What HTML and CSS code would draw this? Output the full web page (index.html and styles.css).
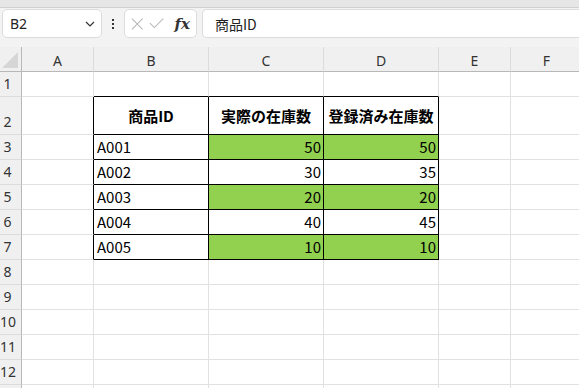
FILE: index.html
```html
<!DOCTYPE html>
<html>
<head>
    <title>在庫比較</title>
    <link rel="stylesheet" href="styles.css">
</head>
<body>
    <div class="topStrip"></div>

    <div class="formulaBar">
        <div class="nameBox">
            <span>B2</span>
            <svg class="chevron" width="10" height="6" viewBox="0 0 10 6"><path d="M1 1 L5 5 L9 1" fill="none" stroke="#333" stroke-width="1.2"/></svg>
        </div>
        <div class="moreDots">
            <span></span><span></span><span></span>
        </div>
        <div class="funcBox">
            <svg width="14" height="14" viewBox="0 0 14 14"><path d="M1 1 L13 13 M13 1 L1 13" stroke="#b8b8b8" stroke-width="1.2"/></svg>
            <svg width="17" height="13" viewBox="0 0 17 13"><path d="M1 6 L6 11 L16 1" fill="none" stroke="#b8b8b8" stroke-width="1.2"/></svg>
            <span class="fx">fx</span>
        </div>
        <div class="formulaInput">商品ID</div>
    </div>

    <table class="sheet">
        <colgroup>
            <col class="rowHeadCol">
            <col class="narrowCol">
            <col class="wideCol">
            <col class="wideCol">
            <col class="wideCol">
            <col class="narrowCol">
            <col class="narrowCol">
        </colgroup>
        <tr class="colHeads">
            <th class="corner"><div class="cornerMark"></div></th>
            <th>A</th><th>B</th><th>C</th><th>D</th><th>E</th><th>F</th>
        </tr>
        <tr>
            <th class="rowHead">1</th>
            <td></td><td class="edgeBottom"></td><td class="edgeBottom"></td><td class="edgeBottom"></td><td></td><td></td>
        </tr>
        <tr class="tallRow">
            <th class="rowHead">2</th>
            <td class="edgeRight"></td>
            <td class="boxed title">商品ID</td>
            <td class="boxed title">実際の在庫数</td>
            <td class="boxed title">登録済み在庫数</td>
            <td></td><td></td>
        </tr>
        <tr>
            <th class="rowHead">3</th>
            <td class="edgeRight"></td>
            <td class="boxed">A001</td>
            <td class="boxed num green">50</td>
            <td class="boxed num green">50</td>
            <td></td><td></td>
        </tr>
        <tr>
            <th class="rowHead">4</th>
            <td class="edgeRight"></td>
            <td class="boxed">A002</td>
            <td class="boxed num">30</td>
            <td class="boxed num">35</td>
            <td></td><td></td>
        </tr>
        <tr>
            <th class="rowHead">5</th>
            <td class="edgeRight"></td>
            <td class="boxed">A003</td>
            <td class="boxed num green">20</td>
            <td class="boxed num green">20</td>
            <td></td><td></td>
        </tr>
        <tr>
            <th class="rowHead">6</th>
            <td class="edgeRight"></td>
            <td class="boxed">A004</td>
            <td class="boxed num">40</td>
            <td class="boxed num">45</td>
            <td></td><td></td>
        </tr>
        <tr>
            <th class="rowHead">7</th>
            <td class="edgeRight"></td>
            <td class="boxed">A005</td>
            <td class="boxed num green">10</td>
            <td class="boxed num green">10</td>
            <td></td><td></td>
        </tr>
        <tr><th class="rowHead">8</th><td></td><td></td><td></td><td></td><td></td><td></td></tr>
        <tr><th class="rowHead">9</th><td></td><td></td><td></td><td></td><td></td><td></td></tr>
        <tr><th class="rowHead">10</th><td></td><td></td><td></td><td></td><td></td><td></td></tr>
        <tr><th class="rowHead">11</th><td></td><td></td><td></td><td></td><td></td><td></td></tr>
        <tr><th class="rowHead">12</th><td></td><td></td><td></td><td></td><td></td><td></td></tr>
        <tr><th class="rowHead"></th><td></td><td></td><td></td><td></td><td></td><td></td></tr>
    </table>
</body>
</html>
```

FILE: styles.css
```css
body {
    margin: 0;
    overflow: hidden;
    background: #ffffff;
    font-family: "Noto Sans CJK JP", "Noto Sans", sans-serif;
    color: #000;
}
.topStrip {
    height: 7px;
    background: #e6e6e6;
    border-bottom: 1px solid #d0d0d0;
}
.formulaBar {
    display: flex;
    align-items: center;
    height: 31px;
    padding: 0 0 8px 2px;
    background: #f3f3f3;
}
.nameBox, .funcBox, .formulaInput {
    height: 29px;
    box-sizing: border-box;
    background: #fff;
    border: 1px solid #dcdcdc;
    border-radius: 5px;
    display: flex;
    align-items: center;
}
.nameBox {
    width: 100px;
    padding: 0 6px 0 7px;
    justify-content: space-between;
    font-family: "Noto Sans", sans-serif;
    font-size: 14px;
    color: #222;
}
.moreDots {
    width: 22px;
    display: flex;
    flex-direction: column;
    align-items: center;
    gap: 2px;
}
.moreDots span {
    width: 2px;
    height: 2px;
    background: #333;
}
.funcBox {
    width: 73px;
    padding: 0 6px;
    gap: 6px;
}
.fx {
    font-family: "DejaVu Serif", "Liberation Serif", serif;
    font-style: italic;
    font-weight: bold;
    font-size: 15px;
    color: #333;
    margin-left: 4px;
}
.formulaInput {
    flex: 1;
    margin-left: 5px;
    padding-left: 12px;
    font-size: 14px;
    color: #222;
    border-right: none;
    border-radius: 5px 0 0 5px;
}
.sheet {
    table-layout: fixed;
    border-collapse: separate;
    border-spacing: 0;
    width: 583px;
}
.rowHeadCol { width: 22px; }
.narrowCol { width: 72px; }
.wideCol { width: 115px; }
.sheet tr {
    height: 25px;
}
.sheet tr.colHeads {
    height: 25px;
}
.sheet tr.tallRow {
    height: 38px;
}
.sheet td {
    box-sizing: border-box;
    padding: 0 2px 3px 3px;
    border-right: 1px solid #e1e1e1;
    border-bottom: 1px solid #e1e1e1;
    font-size: 15px;
    line-height: 18px;
    vertical-align: bottom;
    white-space: nowrap;
    overflow: hidden;
}
.colHeads th {
    background: #f0f0f0;
    border-bottom: 1px solid #b8b8b8;
    border-right: 1px solid #dcdcdc;
    font-family: "Noto Sans", sans-serif;
    font-weight: normal;
    font-size: 14px;
    color: #333;
    padding: 2px 0 0;
}
.colHeads th.corner {
    border-right: 1px solid #b8b8b8;
    position: relative;
    padding: 0;
}
.cornerMark {
    position: absolute;
    right: 3px;
    bottom: 3px;
    width: 0;
    height: 0;
    border-left: 16px solid transparent;
    border-bottom: 16px solid #d6d6d6;
}
.rowHead {
    background: #f0f0f0;
    border-right: 1px solid #b8b8b8;
    border-bottom: 1px solid #dcdcdc;
    font-family: "Noto Sans", sans-serif;
    font-weight: normal;
    font-size: 14px;
    color: #333;
    text-align: center;
    vertical-align: bottom;
    padding: 0 6px 3px 0;
    line-height: 18px;
}
.sheet td.edgeRight {
    border-right-color: #000;
}
.sheet td.edgeBottom {
    border-bottom-color: #000;
}
.sheet td.boxed {
    border-right-color: #000;
    border-bottom-color: #000;
}
.sheet td.title {
    text-align: center;
    vertical-align: middle;
    font-weight: bold;
    padding: 0;
}
.sheet td.num {
    text-align: right;
}
.sheet td.green {
    background: #92d050;
}
```
